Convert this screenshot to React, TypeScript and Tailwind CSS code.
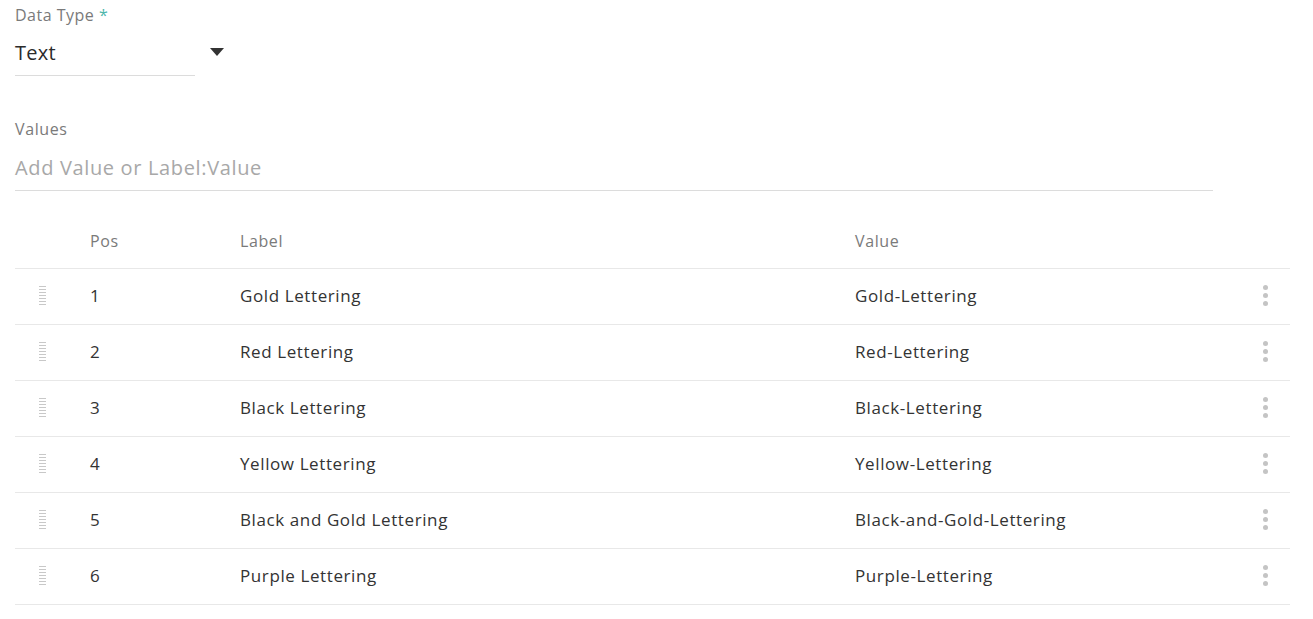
import React from "react";

const rows = [
  { pos: 1, label: "Gold Lettering", value: "Gold-Lettering" },
  { pos: 2, label: "Red Lettering", value: "Red-Lettering" },
  { pos: 3, label: "Black Lettering", value: "Black-Lettering" },
  { pos: 4, label: "Yellow Lettering", value: "Yellow-Lettering" },
  { pos: 5, label: "Black and Gold Lettering", value: "Black-and-Gold-Lettering" },
  { pos: 6, label: "Purple Lettering", value: "Purple-Lettering" },
];

function DragHandle() {
  return (
    <div className="flex flex-col gap-[2px] w-[7px]">
      {Array.from({ length: 7 }).map((_, i) => (
        <div key={i} className="h-px w-full bg-[#c8c8c8]" />
      ))}
    </div>
  );
}

function Kebab() {
  return (
    <div className="flex flex-col gap-[3px] items-center">
      <div className="w-[5px] h-[5px] rounded-full bg-[#c4c4c4]" />
      <div className="w-[5px] h-[5px] rounded-full bg-[#c4c4c4]" />
      <div className="w-[5px] h-[5px] rounded-full bg-[#c4c4c4]" />
    </div>
  );
}

export default function App() {
  return (
    <div className="min-h-screen bg-white pl-[15px] pr-[23px] font-['Open_Sans',sans-serif] text-[#333]">
      <div className="pt-[5px]">
        <label className="block text-[16px] tracking-[0.5px] leading-[20px] text-[#7a7a7a]">
          Data Type <span className="text-[#4db6ac]">*</span>
        </label>
        <div className="flex items-center w-[210px] mt-[6px]">
          <div className="w-[180px] border-b border-[#dcdcdc] h-[45px] flex items-center text-[20px] tracking-[0.3px] text-[#2b2b2b]">
            Text
          </div>
          <div className="ml-[15px] -mt-[4px] w-0 h-0 border-l-[7px] border-r-[7px] border-t-[8px] border-l-transparent border-r-transparent border-t-[#333]" />
        </div>
      </div>

      <div className="mt-[43px]">
        <label className="block text-[16px] tracking-[0.6px] leading-[20px] text-[#7a7a7a]">Values</label>
        <div className="w-[1198px] border-b border-[#dcdcdc] h-[52px] pt-[6px] flex items-center text-[20px] tracking-[0.65px] text-[#a8a8a8]">
          Add Value or Label:Value
        </div>
      </div>

      <div className="mt-[28px]">
        <div className="flex items-center h-[50px] pb-[6px] border-b border-[#e8e8e8] text-[16px] tracking-[0.6px] text-[#7a7a7a]">
          <div className="w-[75px]" />
          <div className="w-[150px]">Pos</div>
          <div className="w-[615px]">Label</div>
          <div className="flex-1">Value</div>
        </div>
        {rows.map((r) => (
          <div key={r.pos} className="flex items-center h-[56px] pb-[2px] border-b border-[#e8e8e8] text-[17px] tracking-[0.6px] text-[#333]">
            <div className="w-[75px] pl-[24px]">
              <DragHandle />
            </div>
            <div className="w-[150px]">{r.pos}</div>
            <div className="w-[615px]">{r.label}</div>
            <div className="flex-1">{r.value}</div>
            <div className="w-[50px] flex justify-center">
              <Kebab />
            </div>
          </div>
        ))}
      </div>
    </div>
  );
}
